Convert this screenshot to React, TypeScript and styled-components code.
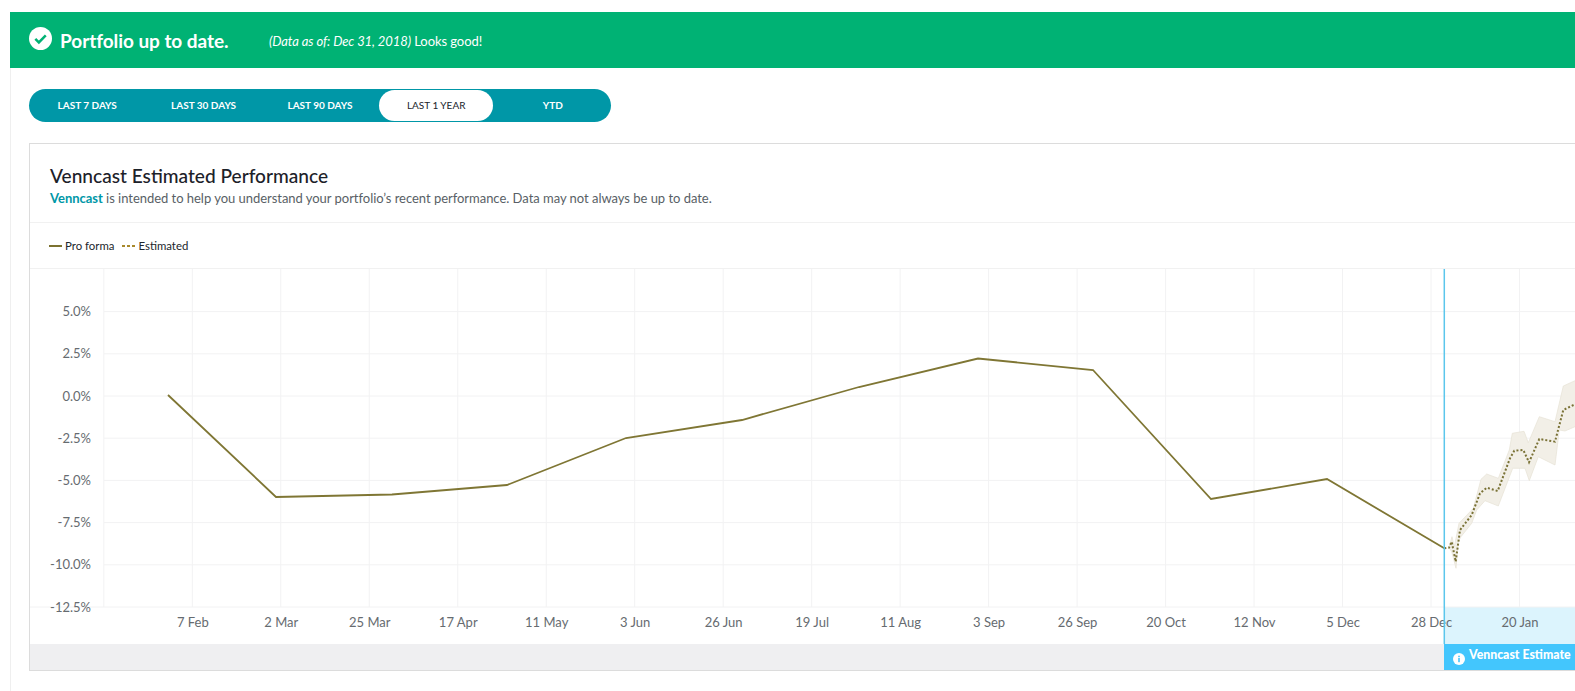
import React from 'react';
import styled, { createGlobalStyle } from 'styled-components';

const Global = createGlobalStyle`
  html, body { margin: 0; padding: 0; background: #fff; overflow: hidden; height: 691px; }
  body { font-family: Lato, "Open Sans", sans-serif; }
`;

const Page = styled.div`
  width: 1575px; height: 691px; overflow: hidden; padding: 12px 0 0 10px; box-sizing: border-box;
`;
const Main = styled.main`
  width: 1700px; height: 679px; border-left: 1px solid #efefef; box-sizing: border-box;
`;
const Banner = styled.header`
  height: 56px; margin-left: -1px; background: #00b274; color: #fff;
  display: flex; align-items: center; padding-left: 19px;
`;
const BannerIcon = styled.svg`
  width: 23px; height: 23px; flex: none; margin-top: -3px;
`;
const BannerTitle = styled.h1`
  margin: 1px 0 0 8px; width: 209px; font-size: 19px; font-weight: 700; letter-spacing: -0.05px; line-height: 1;
`;
const BannerNote = styled.p`
  margin: 3px 0 0 0; font-size: 13px; letter-spacing: -0.08px; line-height: 1;
  em { font-style: italic; }
`;
const Content = styled.div`
  padding: 21px 0 0 18px;
`;
const Tabs = styled.nav`
  display: flex; width: 582px; height: 33px; box-sizing: border-box; border-radius: 17px;
  background: #0097a7; padding: 1px 0;
`;
const Tab = styled.div<{ $active?: boolean }>`
  display: flex; align-items: center; justify-content: center;
  font-size: 10px; font-weight: ${p => (p.$active ? 400 : 700)};
  color: ${p => (p.$active ? '#20242b' : '#fff')};
  background: ${p => (p.$active ? '#fff' : 'transparent')};
  border-radius: 16px;
  padding-bottom: 2px; box-sizing: border-box;
  margin: ${p => (p.$active ? '0 1.4px 0 1px' : '0')};
  flex: ${p => (p.$active ? '0 0 114px' : '0 0 116.4px')};
`;
const Card = styled.section`
  margin-top: 21px; width: 1640px; height: 528px; box-sizing: border-box;
  border: 1px solid #dcdcdc; background: #fff; display: flex; flex-direction: column;
`;
const CardHead = styled.div`
  height: 79px; box-sizing: border-box; padding: 19px 0 0 20px; border-bottom: 1px solid #f1f1f1;
`;
const CardTitle = styled.h2`
  margin: 0 0 1px; font-size: 19.1px; font-weight: 500; color: #1c2129; line-height: 25px;
`;
const CardSub = styled.p`
  margin: 0; font-size: 13px; color: #595f66; line-height: 18px; letter-spacing: -0.03px;
  strong { color: #0097a7; font-weight: 700; }
`;
const Legend = styled.div`
  height: 46px; box-sizing: border-box; padding-left: 19px; border-bottom: 1px solid #f1f1f1;
  display: flex; align-items: center; font-size: 11.4px; color: #22262c;
`;
const LegendItem = styled.span`
  display: inline-flex; align-items: center; margin-right: 8px;
`;
const Swatch = styled.svg`
  width: 13px; height: 2px; margin-right: 3px; flex: none;
`;
const Chart = styled.svg`
  display: block; width: 1638px; height: 375px; flex: none;
`;
const Footer = styled.div`
  height: 26px; display: flex; background: #efeff1;
`;
const FooterSpacer = styled.div`
  width: 1414px; flex: none;
`;
const Flag = styled.div`
  flex: 1; background: #43c6fd; color: #fff; display: flex; align-items: center;
  padding-left: 9px; font-size: 12.3px; font-weight: 900;
`;
const FlagIcon = styled.svg`
  width: 12px; height: 12px; margin-right: 4px; margin-top: 3px; flex: none;
`;
const FlagText = styled.span`
  margin-top: -5px;
`;

const xLabels = ['7 Feb','2 Mar','25 Mar','17 Apr','11 May','3 Jun','26 Jun','19 Jul','11 Aug','3 Sep','26 Sep','20 Oct','12 Nov','5 Dec','28 Dec','20 Jan'];
const yLabels = ['5.0%','2.5%','0.0%','-2.5%','-5.0%','-7.5%','-10.0%','-12.5%'];
const xAt = (i: number) => 192.8 + 88.48 * i;
const yAt = (i: number) => 311.6 + 42.2 * i;

const solid = '168,395 276,497 392,494.5 507,485 626,438 742,420 859,387 978,358.5 1093,370 1211,499 1327,479 1444.3,548.3';
const z = (pts: number[][]) => pts.map(([x, y]) => `${(1375 + x / 3).toFixed(1)},${(360 + y / 3).toFixed(1)}`).join(' ');
const dotted = z([[208,565],[222,563],[230,545],[242,605],[255,510],[290,465],[315,400],[335,383],[368,393],[405,295],[418,272],[445,270],[462,307],[493,237],[540,245],[565,150],[600,133],[640,115]]);
const band = z([[222,563],[231,530],[238,560],[252,490],[295,445],[318,358],[335,342],[370,355],[403,270],[412,220],[447,214],[460,248],[493,170],[540,185],[565,78],[600,62],[640,45],[640,180],[600,200],[570,213],[553,210],[540,315],[490,290],[463,362],[450,325],[413,325],[370,438],[330,422],[305,450],[290,490],[258,530],[250,545],[243,625],[230,575]]);

export default function App() {
  return (
    <Page>
      <Global />
      <Main>
        <Banner>
          <BannerIcon viewBox="0 0 24 24">
            <circle cx="12" cy="12" r="12" fill="#fff" />
            <path d="M6.6 12.4l3.7 3.7 7.2-7.4" fill="none" stroke="#00b274" strokeWidth="2.6" />
          </BannerIcon>
          <BannerTitle>Portfolio up to date.</BannerTitle>
          <BannerNote><em>(Data as of: Dec 31, 2018)</em> Looks good!</BannerNote>
        </Banner>
        <Content>
          <Tabs>
            <Tab>LAST 7 DAYS</Tab>
            <Tab>LAST 30 DAYS</Tab>
            <Tab>LAST 90 DAYS</Tab>
            <Tab $active>LAST 1 YEAR</Tab>
            <Tab>YTD</Tab>
          </Tabs>
          <Card>
            <CardHead>
              <CardTitle>Venncast Estimated Performance</CardTitle>
              <CardSub><strong>Venncast</strong> is intended to help you understand your portfolio’s recent performance. Data may not always be up to date.</CardSub>
            </CardHead>
            <Legend>
              <LegendItem>
                <Swatch viewBox="0 0 13 2"><rect width="13" height="2" fill="#7c7230" /></Swatch>
                Pro forma
              </LegendItem>
              <LegendItem>
                <Swatch viewBox="0 0 13 2"><path d="M0 1h3M5 1h3M10 1h3" stroke="#a8892c" strokeWidth="2" /></Swatch>
                Estimated
              </LegendItem>
            </Legend>
            <Chart viewBox="30 269 1638 375">
              <rect x="1444" y="607" width="224" height="37" fill="#dcf4fd" />
              {[-1, ...xLabels.map((_, i) => i), 16].map(i => (
                <line key={i} x1={xAt(i) - 0.5} x2={xAt(i) - 0.5} y1="269" y2="607" stroke="#f2f2f3" />
              ))}
              {yLabels.map((_, i) => (
                <line key={i} x1={i === 7 ? 30 : 104} x2="1668" y1={yAt(i)} y2={yAt(i)} stroke="#f2f2f3" />
              ))}
              {yLabels.map((l, i) => (
                <text key={l} x="91" y={yAt(i) + 4.5} textAnchor="end" fontSize="13" fill="#666b70" fontFamily="Lato, sans-serif">{l}</text>
              ))}
              {xLabels.map((l, i) => (
                <text key={l} x={xAt(i)} y="626.5" textAnchor="middle" fontSize="13" fill="#666b70" fontFamily="Lato, sans-serif">{l}</text>
              ))}
              <polygon points={band} fill="#f2efe7" stroke="#e6e2d6" strokeWidth="0.7" />
              <polyline points={solid} fill="none" stroke="#7f7634" strokeWidth="1.8" />
              <polyline points={dotted} fill="none" stroke="#7a7236" strokeWidth="2" strokeDasharray="2 2" />
              <line x1="1444.3" x2="1444.3" y1="269" y2="644" stroke="#5bc6ec" strokeWidth="1.5" />
            </Chart>
            <Footer>
              <FooterSpacer />
              <Flag>
                <FlagIcon viewBox="0 0 12 12">
                  <circle cx="6" cy="6" r="6" fill="#fff" />
                  <rect x="5.2" y="5" width="1.6" height="4.2" fill="#43c6fd" />
                  <rect x="5.2" y="2.7" width="1.6" height="1.5" fill="#43c6fd" />
                </FlagIcon>
                <FlagText>Venncast Estimate</FlagText>
              </Flag>
            </Footer>
          </Card>
        </Content>
      </Main>
    </Page>
  );
}
